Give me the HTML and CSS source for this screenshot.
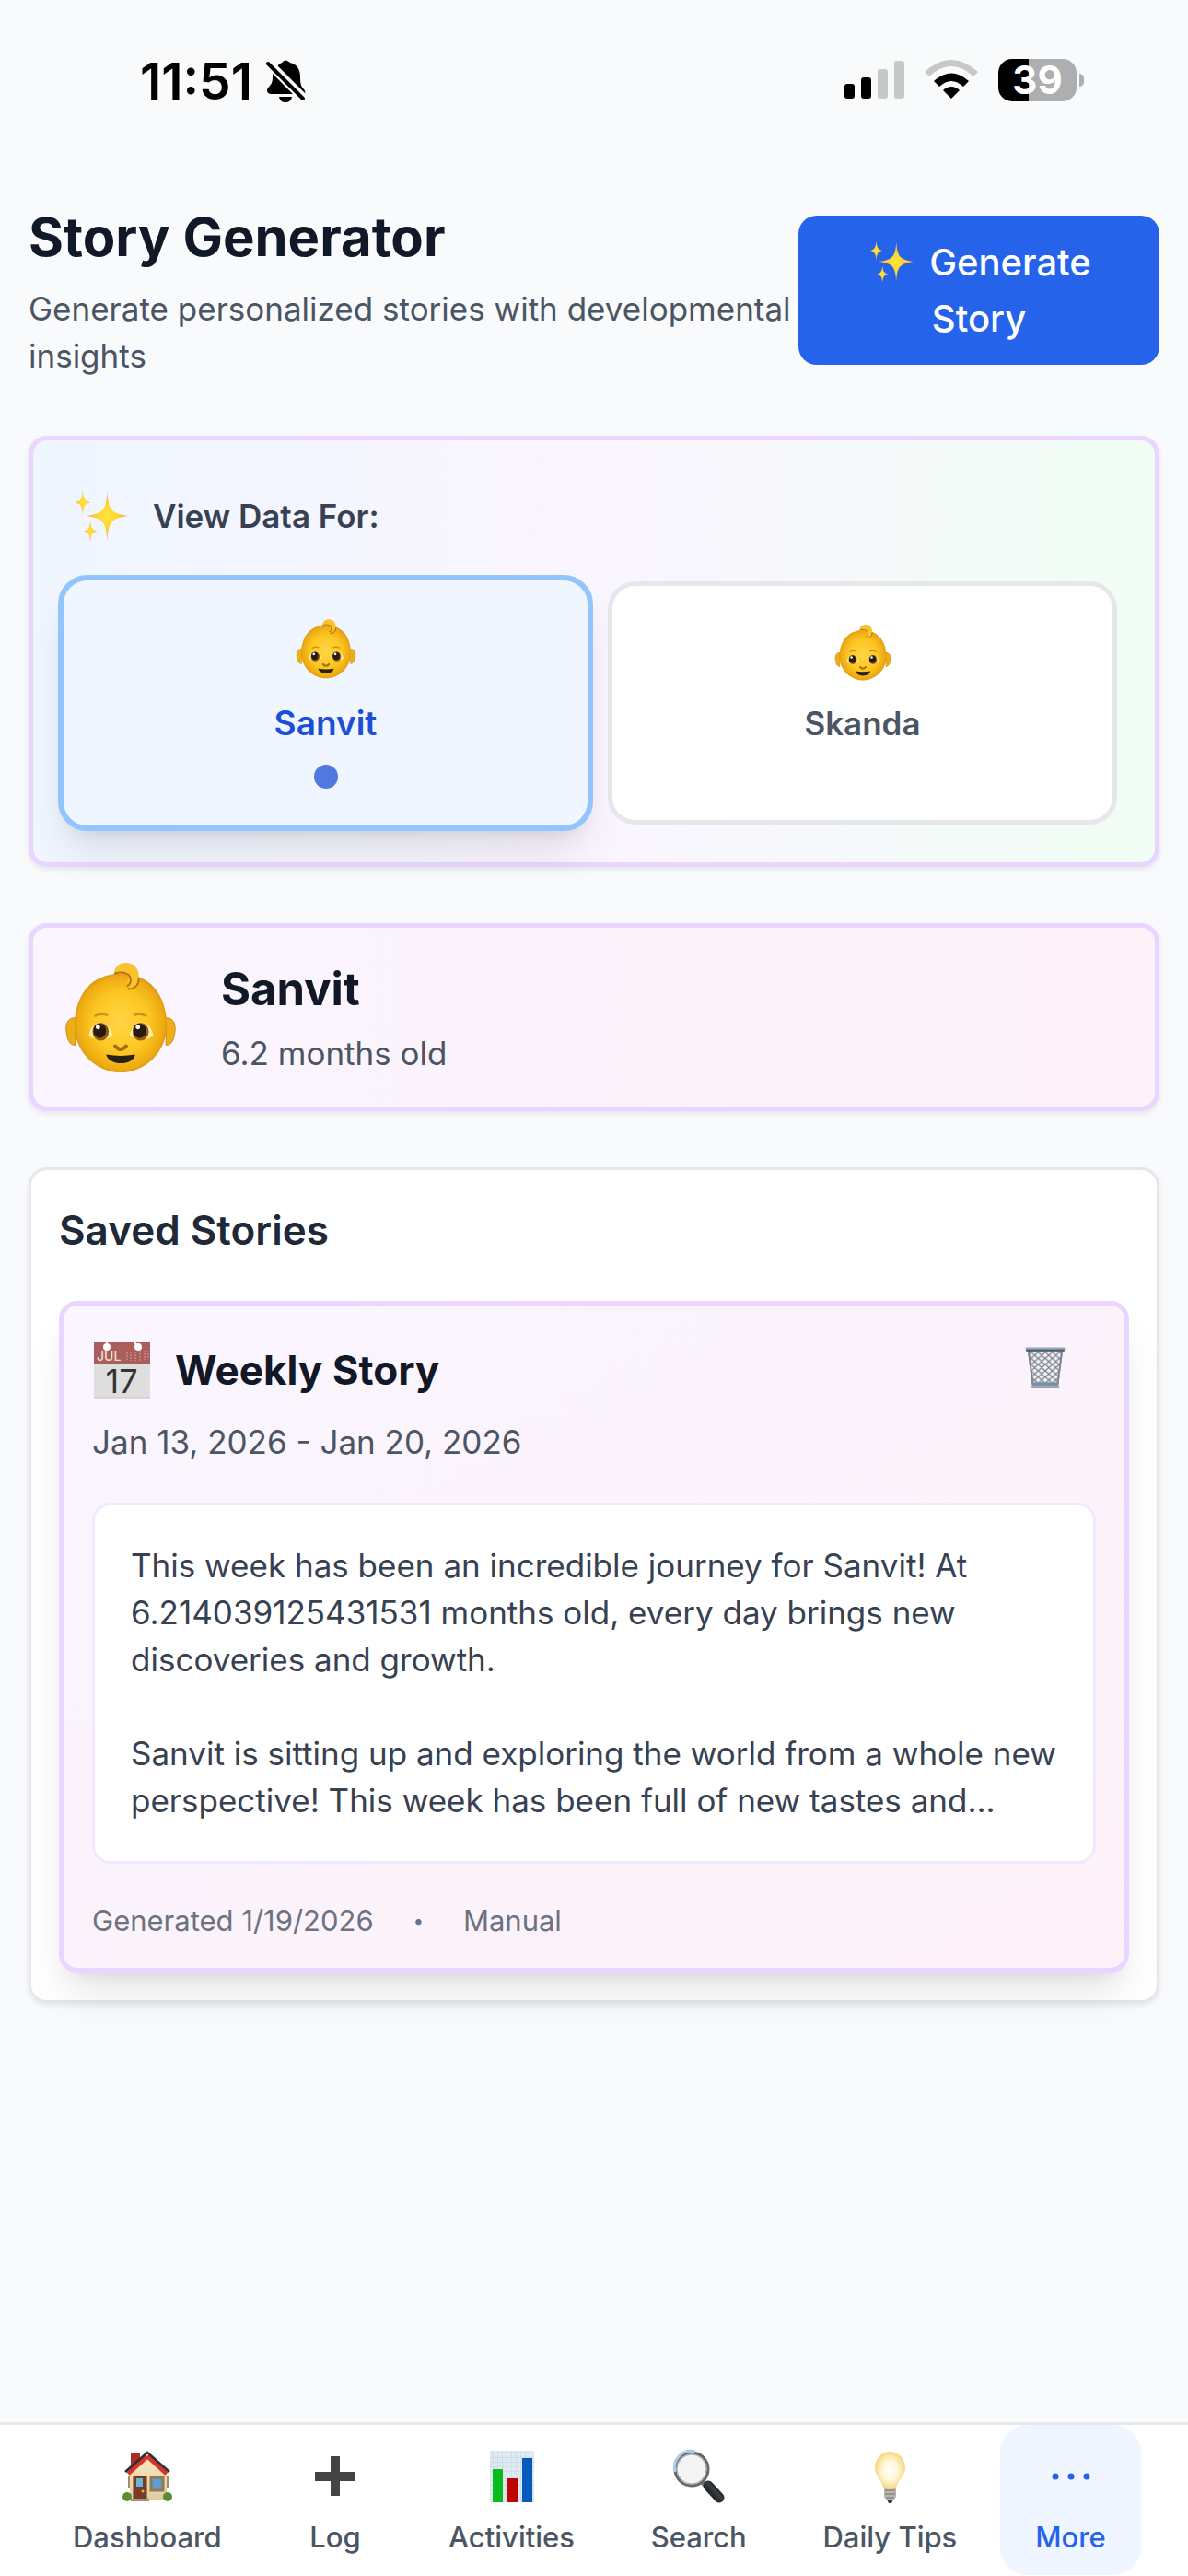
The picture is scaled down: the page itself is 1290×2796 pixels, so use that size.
FILE: index.html
```
<!DOCTYPE html>
<html lang="en">
<head>
  <meta charset="UTF-8">
  <meta name="viewport" content="width=device-width, initial-scale=1">
  <title>Story Generator</title>
  <link rel="stylesheet" href="styles.css">
</head>
<body>

<!-- Icon sprite -->
<svg class="sprite" aria-hidden="true">
  <defs>
    <radialGradient id="gold"><stop offset="0" stop-color="#ffe33b"/><stop offset=".5" stop-color="#fdd436"/><stop offset="1" stop-color="#f3a04a"/></radialGradient>
    <radialGradient id="skin" cx=".5" cy=".5" r=".55"><stop offset="0" stop-color="#ffd545"/><stop offset=".55" stop-color="#fdc722"/><stop offset=".85" stop-color="#edab12"/><stop offset="1" stop-color="#c98512"/></radialGradient>
    <radialGradient id="glow" cx=".5" cy=".5" r=".55"><stop offset="0" stop-color="#fffefa"/><stop offset=".45" stop-color="#fff8da"/><stop offset="1" stop-color="#f5d26e"/></radialGradient>
    <linearGradient id="wall" x1="0" y1="0" x2="0" y2="1"><stop offset="0" stop-color="#ffe8bf"/><stop offset="1" stop-color="#dfcba0"/></linearGradient>
    <linearGradient id="handle" x1="0" y1="1" x2="1" y2="0"><stop offset="0" stop-color="#111"/><stop offset=".6" stop-color="#3b3f42"/><stop offset="1" stop-color="#0b0b0b"/></linearGradient>
    <pattern id="mesh" width="8" height="7" patternUnits="userSpaceOnUse"><path d="M0 0L8 7M8 0L0 7" stroke="#747b84" stroke-width="1.3" fill="none"/></pattern>
    <pattern id="grid" width="5" height="5" patternUnits="userSpaceOnUse"><path d="M5 0H0V5" stroke="#c4d3de" stroke-width="1" fill="none"/></pattern>
  </defs>

  <symbol id="i-sparkles" viewBox="0 0 72 72">
    <g fill="url(#gold)">
      <path d="M43 7c1.500 21 4 26 25 29c-21 3-23.500 8-25 29c-1.500-21-4-26-25-29c21-3 23.500-8 25-29z"/>
      <path d="M14 6c1 9.500 2 12 9 14c-7 2-8 4.500-9 14c-1-9.500-2-12-9-14c7-2 8-4.500 9-14z"/>
      <path d="M23 42c1 8 2 10.500 8 12c-6 1.500-7 4-8 12c-1-8-2-10.500-8-12c6-1.500 7-4 8-12z"/>
    </g>
  </symbol>

  <symbol id="i-baby" viewBox="0 0 136 136">
    <path d="M8 83c-1-10 4-15 10-14v30c-6 0-9-6-10-16zM128 83c1-10-4-15-10-14v30c6 0 9-6 10-16z" fill="#eeae18" stroke="#cd8a12" stroke-width="1"/>
    <path d="M68 20c31 0 50 22 51 56c0 32-26 53-51 53s-51-21-51-53c1-34 20-56 51-56z" fill="url(#skin)"/>
    <path d="M61 20c0-8 6-12 13-12c8 0 14 6 14 14c0 9-4 14-12 15l4-5c-4 0-5-1-5-3c5-5 1-10-14-9z" fill="#fac32b"/>
    <path d="M61 20c10-3 19 0 18 8c0 3-1 4-4 6M88 25c0 8-5 12-12 12" fill="none" stroke="#b2740f" stroke-width="2"/>
    <path d="M39 67q7-4 15-1M82 66q8-3 15 1" fill="none" stroke="#cd9217" stroke-width="2.500"/>
    <path d="M33 88c4-19 22-19 26 0c-6 6-20 6-26 0zM78 88c4-19 22-19 26 0c-6 6-20 6-26 0z" fill="#fff0aa"/>
    <ellipse cx="46" cy="84" rx="9" ry="10" fill="#985b10"/>
    <ellipse cx="90" cy="84" rx="9" ry="10" fill="#985b10"/>
    <ellipse cx="45" cy="83" rx="7" ry="8" fill="#271a10"/>
    <ellipse cx="89" cy="83" rx="7" ry="8" fill="#271a10"/>
    <circle cx="43" cy="79" r="2.500" fill="#fff"/>
    <circle cx="87" cy="79" r="2.500" fill="#fff"/>
    <path d="M62 100q6 7 12 0" fill="none" stroke="#a96a0c" stroke-width="4" stroke-linecap="round"/>
    <path d="M52 109q16 3 32 0c-2 13-29 13-32 0z" fill="#2b2117"/>
  </symbol>

  <symbol id="i-trash" viewBox="0 0 48 48">
    <path d="M4 4h40l-5 41H9z" fill="#f1f2f6"/>
    <path d="M4 4h40l-5 41H9z" fill="url(#mesh)"/>
    <path d="M5 5l5 38M43 5l-5 38" stroke="#7c838b" stroke-width="2"/>
    <path d="M9 43h30" stroke="#7890a8" stroke-width="4"/>
    <path d="M8 46h32" stroke="#555b60" stroke-width="1"/>
    <path d="M3 3h42" stroke="#8da5bf" stroke-width="3" stroke-linecap="round"/>
    <path d="M3 5h42" stroke="#50575d" stroke-width="2" stroke-linecap="round"/>
  </symbol>

  <symbol id="i-house" viewBox="0 0 72 72">
    <path d="M18 10h10v14l-10 10z" fill="#a92f27"/>
    <path d="M15 36h4v12h-4zM55 36h4v12h-4z" fill="#a38c68"/>
    <path d="M36 14l21 18v30H17V32z" fill="url(#wall)"/>
    <path d="M36 14L15 33" stroke="#d9332c" stroke-width="5"/>
    <path d="M36 14l21 19" stroke="#d9332c" stroke-width="5"/>
    <path d="M12 31l24-21l24 21" fill="none" stroke="#2b3033" stroke-width="2.500"/>
    <path d="M21 36h14v26H21z" fill="#7b3a25" stroke="#55301f"/>
    <path d="M24 38h7v9h-7z" fill="#69b4dd"/>
    <circle cx="31" cy="52" r="1.500" fill="#f1b53e"/>
    <path d="M40 37h13v14H40z" fill="#5c9fd3" stroke="#977653" stroke-width="3"/>
    <circle cx="14" cy="58" r="5" fill="#5c8c31"/>
    <circle cx="58" cy="58" r="5" fill="#5c8c31"/>
    <path d="M18 60h20v3H18z" fill="#a29286"/>
  </symbol>

  <symbol id="i-plus" viewBox="0 0 72 72">
    <path d="M31 14h10v17h17v10H41v16H31V41H14V31h17z" fill="#444"/>
  </symbol>

  <symbol id="i-chart" viewBox="0 0 72 72">
    <path d="M12 8h48v56H12z" fill="#dfe9f1"/>
    <path d="M12 8h48v56H12z" fill="url(#grid)"/>
    <path d="M15 28h11v36H15z" fill="#06bd1d"/>
    <path d="M31 38h11v26H31z" fill="#bd0505"/>
    <path d="M47 16h11v48H47z" fill="#0659bd"/>
  </symbol>

  <symbol id="i-search" viewBox="0 0 72 72">
    <path d="M39 42l6 5" stroke="#777" stroke-width="5"/>
    <circle cx="28" cy="28" r="18" fill="#f4f4f4" stroke="#62696d" stroke-width="3"/>
    <path d="M10 31A18 18 0 0 1 32 9" fill="none" stroke="#a9cbec" stroke-width="3"/>
    <circle cx="28" cy="28" r="16" fill="none" stroke="#9ba1a4" stroke-width="1"/>
    <path d="M46 46l12 13" stroke="url(#handle)" stroke-width="11" stroke-linecap="round"/>
  </symbol>

  <symbol id="i-bulb" viewBox="0 0 72 72">
    <path d="M30 47h13v11l-3 4h-7l-3-4z" fill="#b9b5ac"/>
    <path d="M31 51h11M31 55h11M32 59h9" stroke="#77736b"/>
    <path d="M33 61h7l-2 4h-3z" fill="#3c3c3c"/>
    <path d="M36 9c10 0 17 8 17 18c0 9-9 14-10 22q-7 2-14 0C29 41 20 36 20 27C20 17 27 9 36 9z" fill="url(#glow)"/>
  </symbol>

  <symbol id="i-more" viewBox="0 0 72 72">
    <g fill="#2563eb"><circle cx="19" cy="36" r="3.500"/><circle cx="36" cy="36" r="3.500"/><circle cx="53" cy="36" r="3.500"/></g>
  </symbol>
</svg>

<!-- Status bar -->
<div class="status-bar">
  <div class="status-left">
    <span class="clock">11:51</span>
    <svg width="44" height="48" viewBox="0 0 44 48" role="img" aria-label="Silent mode">
      <path d="M13 8q2-3 5-4q4-5 9 0c8 2 11 8 11 15c0 8 1 11 4 14q2 2 1 5H7q-5 0-5-4q0-2 3-5c3-3 3-6 3-14q0-4 2-7z"/>
      <path d="M15 41h14q-1 6-7 6t-7-6z"/>
      <path d="M2 3l42 42" stroke="#f9fafc" stroke-width="10"/>
      <path d="M3 5l38 38" stroke="#000" stroke-width="4" stroke-linecap="round"/>
    </svg>
  </div>
  <div class="status-right">
    <svg width="65" height="46" viewBox="0 0 65 46" role="img" aria-label="Signal">
      <rect x="0" y="27" width="11" height="16" rx="3"/>
      <rect x="18" y="20" width="11" height="23" rx="3"/>
      <rect x="36" y="11" width="11" height="32" rx="3" fill="#c7c9c9"/>
      <rect x="54" y="2" width="11" height="41" rx="3" fill="#c7c9c9"/>
    </svg>
    <svg width="58" height="46" viewBox="0 0 58 46" role="img" aria-label="Wi-Fi">
      <path d="M0 14Q29-12 58 14l-5 5Q29-3 5 19z" fill="#c7c9c9"/>
      <path d="M10 24q19-17 38 0l-6 6q-13-12-26 0z"/>
      <path d="M20 34q9-8 18 0l-9 9z"/>
    </svg>
    <div class="battery">
      <span class="battery-level">39</span>
      <i class="battery-cap"></i>
    </div>
  </div>
</div>

<main class="page">
  <header class="page-header">
    <div class="page-heading">
      <h1>Story Generator</h1>
      <p>Generate personalized stories with developmental insights</p>
    </div>
    <button type="button" class="generate-btn"><svg class="btn-icon" aria-hidden="true"><use href="#i-sparkles"/></svg>Generate Story</button>
  </header>

  <!-- Child selector -->
  <section class="card selector">
    <div class="selector-title">
      <svg class="icon-md" aria-hidden="true"><use href="#i-sparkles"/></svg>
      <h2>View Data For:</h2>
    </div>
    <div class="child-grid">
      <button type="button" class="child selected" aria-pressed="true">
        <svg class="child-icon" aria-hidden="true"><use href="#i-baby"/></svg>
        <span>Sanvit</span>
        <i class="dot"></i>
      </button>
      <button type="button" class="child" aria-pressed="false">
        <svg class="child-icon" aria-hidden="true"><use href="#i-baby"/></svg>
        <span>Skanda</span>
      </button>
    </div>
  </section>

  <!-- Current child -->
  <section class="card profile">
    <svg class="profile-icon" aria-hidden="true"><use href="#i-baby"/></svg>
    <div>
      <h2>Sanvit</h2>
      <p>6.2 months old</p>
    </div>
  </section>

  <!-- Saved stories -->
  <section class="card saved">
    <h2>Saved Stories</h2>
    <article class="story">
      <div class="story-head">
        <svg class="icon-lg" viewBox="3 0 72 72" aria-hidden="true">
          <path d="M5 6h61v60H5z" fill="#dedede"/>
          <path d="M5 6h61v23H5z" fill="#aa5e5c"/>
          <path d="M5 66h61" stroke="#c6c6c6"/>
          <path d="M19 5v5M49 5l3 6" stroke="#fff" stroke-width="2"/>
          <circle cx="19" cy="11" r="4" fill="#fff"/>
          <circle cx="53" cy="11" r="4" fill="#fff"/>
          <path d="M41 17v9M45 16v10M50 16v10M55 15v11M60 15v10M64 15v9" stroke="#d59c9a" stroke-dasharray="2 1"/>
          <text x="8" y="26" class="cal-month">JUL</text>
          <text x="35" y="61" text-anchor="middle" class="cal-day">17</text>
        </svg>
        <h3>Weekly Story</h3>
        <button type="button" class="delete-btn" aria-label="Delete story"><svg aria-hidden="true"><use href="#i-trash"/></svg></button>
      </div>
      <p class="story-dates">Jan 13, 2026 - Jan 20, 2026</p>
      <div class="story-body">
        <p>This week has been an incredible journey for Sanvit! At 6.214039125431531 months old, every day brings new discoveries and growth.</p>
        <p>Sanvit is sitting up and exploring the world from a whole new perspective! This week has been full of new tastes and...</p>
      </div>
      <div class="story-meta">
        <span>Generated 1/19/2026</span>
        <span class="sep">•</span>
        <span>Manual</span>
      </div>
    </article>
  </section>
</main>

<nav class="bottom-nav">
  <a href="#dashboard"><svg aria-hidden="true"><use href="#i-house"/></svg>Dashboard</a>
  <a href="#log"><svg aria-hidden="true"><use href="#i-plus"/></svg>Log</a>
  <a href="#activities"><svg aria-hidden="true"><use href="#i-chart"/></svg>Activities</a>
  <a href="#search"><svg aria-hidden="true"><use href="#i-search"/></svg>Search</a>
  <a href="#tips"><svg aria-hidden="true"><use href="#i-bulb"/></svg>Daily Tips</a>
  <a href="#more" class="active"><svg aria-hidden="true"><use href="#i-more"/></svg>More</a>
</nav>

</body>
</html>
```

FILE: styles.css
```
* { box-sizing: border-box; margin: 0; padding: 0; }
body { font-family: Inter, "Liberation Sans", sans-serif; font-size: 35px; line-height: 51px; background: #f9fafc; color: #111827; min-height: 100vh; display: flex; flex-direction: column; }
button { font: inherit; border: none; background: none; cursor: pointer; }
svg { display: block; flex: none; }
.sprite { position: absolute; width: 0; height: 0; }

/* status bar */
.status-bar { display: flex; justify-content: space-between; padding: 64px 113px 0 152px; height: 218px; color: #000; }
.status-left, .status-right { display: flex; align-items: flex-start; }
.status-left { gap: 14px; }
.status-right { gap: 22px; }
.clock { font-size: 55px; font-weight: 600; line-height: 48px; }
.battery { display: flex; align-items: center; gap: 3px; }
.battery-level { width: 85px; height: 46px; border-radius: 15px; background: linear-gradient(to right, #000 39%, #adaeb0 39%); color: #fff; font-size: 42px; line-height: 46px; font-weight: 700; text-align: center; }
.battery-cap { width: 5px; height: 14px; border-radius: 0 5px 5px 0; background: #adaeb0; }

.page { flex: 1; padding: 0 31px 61px; display: flex; flex-direction: column; gap: 61px; }

.page-header { display: flex; justify-content: space-between; align-items: center; }
.page-heading { flex: 1; }
.page-header h1 { font-size: 58px; line-height: 78px; font-weight: 700; margin-bottom: 14px; }
.page-header p { color: #4b5563; }
.generate-btn { width: 392px; padding: 20px 60px; border-radius: 20px; background: #2563eb; color: #fff; font-size: 40px; line-height: 61px; font-weight: 500; }
.btn-icon { display: inline-block; width: 54px; height: 54px; vertical-align: -12px; margin-right: 14px; }

.card { border: 5px solid #e9d5ff; border-radius: 20px; box-shadow: 0 3px 6px rgba(0, 0, 0, .08); }

/* child selector */
.selector { padding: 41px; background: linear-gradient(to right, #eff6ff, #faf5ff, #f0fdf4); }
.selector-title { display: flex; align-items: center; gap: 23px; height: 82px; margin-bottom: 30px; }
.selector-title h2 { font-size: 35px; font-weight: 600; color: #374151; }
.icon-md { width: 66px; height: 66px; }
.child-grid { display: grid; grid-template-columns: 1fr 1fr; gap: 30px; }
.child { display: flex; flex-direction: column; align-items: center; gap: 18px; padding: 38px 38px 40px; border: 5px solid #e5e7eb; border-radius: 30px; background: #fff; color: #4b5563; font-weight: 600; }
.child-icon { width: 68px; height: 68px; }
.child.selected { margin: -7px -14px; border: 6px solid #93c5fd; border-radius: 32px; background: #eff6ff; color: #1d4ed8; font-size: 37px; line-height: 54px; box-shadow: 0 30px 45px -9px rgba(0, 0, 0, .1), 0 12px 18px -12px rgba(0, 0, 0, .1); }
.child.selected .child-icon { width: 72px; height: 72px; }
.dot { width: 26px; height: 26px; border-radius: 50%; background: #5078e0; }

/* current child */
.profile { display: flex; align-items: center; gap: 42px; padding: 30px 28px; background: linear-gradient(to right, #faf5ff, #fdf2f8); }
.profile-icon { width: 134px; height: 134px; }
.profile h2 { font-size: 49px; line-height: 68px; font-weight: 700; margin-bottom: 10px; }
.profile p { color: #4b5563; }

/* saved stories */
.saved { padding: 34px 30px 30px; border: 3px solid #e5e7eb; background: #fff; }
.saved h2 { font-size: 44px; line-height: 62px; font-weight: 600; color: #1f2937; margin-bottom: 46px; }
.story { padding: 30px 31px; border: 5px solid #e9d5ff; border-radius: 20px; background: linear-gradient(to bottom right, #faf5ff, #fdf2f8); box-shadow: 0 30px 45px -9px rgba(0, 0, 0, .1), 0 12px 18px -12px rgba(0, 0, 0, .1); }
.story-head { display: flex; align-items: center; gap: 18px; height: 80px; margin-bottom: 13px; }
.story-head h3 { flex: 1; font-size: 44px; line-height: 62px; font-weight: 700; }
.icon-lg { width: 72px; height: 72px; }
.cal-month { font-size: 14px; font-weight: 500; fill: #f3dddc; }
.cal-day { font-size: 36px; line-height: 36px; font-weight: 400; fill: #333; }
.delete-btn { display: flex; justify-content: center; align-items: flex-start; width: 110px; height: 80px; padding-top: 14px; }
.delete-btn svg { width: 46px; height: 46px; }
.story-dates { color: #4b5563; margin-bottom: 40px; }
.story-body { padding: 40px 30px 40px 39px; border: 3px solid #f3e8ff; border-radius: 20px; background: #fff; color: #374151; }
.story-body p + p { margin-top: 51px; }
.story-meta { display: flex; gap: 43px; margin-top: 41px; font-size: 31px; line-height: 42px; color: #6b7280; }
.sep { font-size: 20px; }

/* bottom nav */
.bottom-nav { display: flex; justify-content: space-between; padding: 0 51px 1px 43px; border-top: 3px solid #e5e7eb; background: #fff; }
.bottom-nav a { display: flex; flex-direction: column; align-items: center; gap: 9px; min-width: 153px; padding: 20px 36px; border-radius: 30px; font-size: 31px; line-height: 42px; font-weight: 500; color: #4b5563; text-decoration: none; }
.bottom-nav svg { width: 72px; height: 72px; }
.bottom-nav .active { background: #eff6ff; color: #2563eb; }
```
